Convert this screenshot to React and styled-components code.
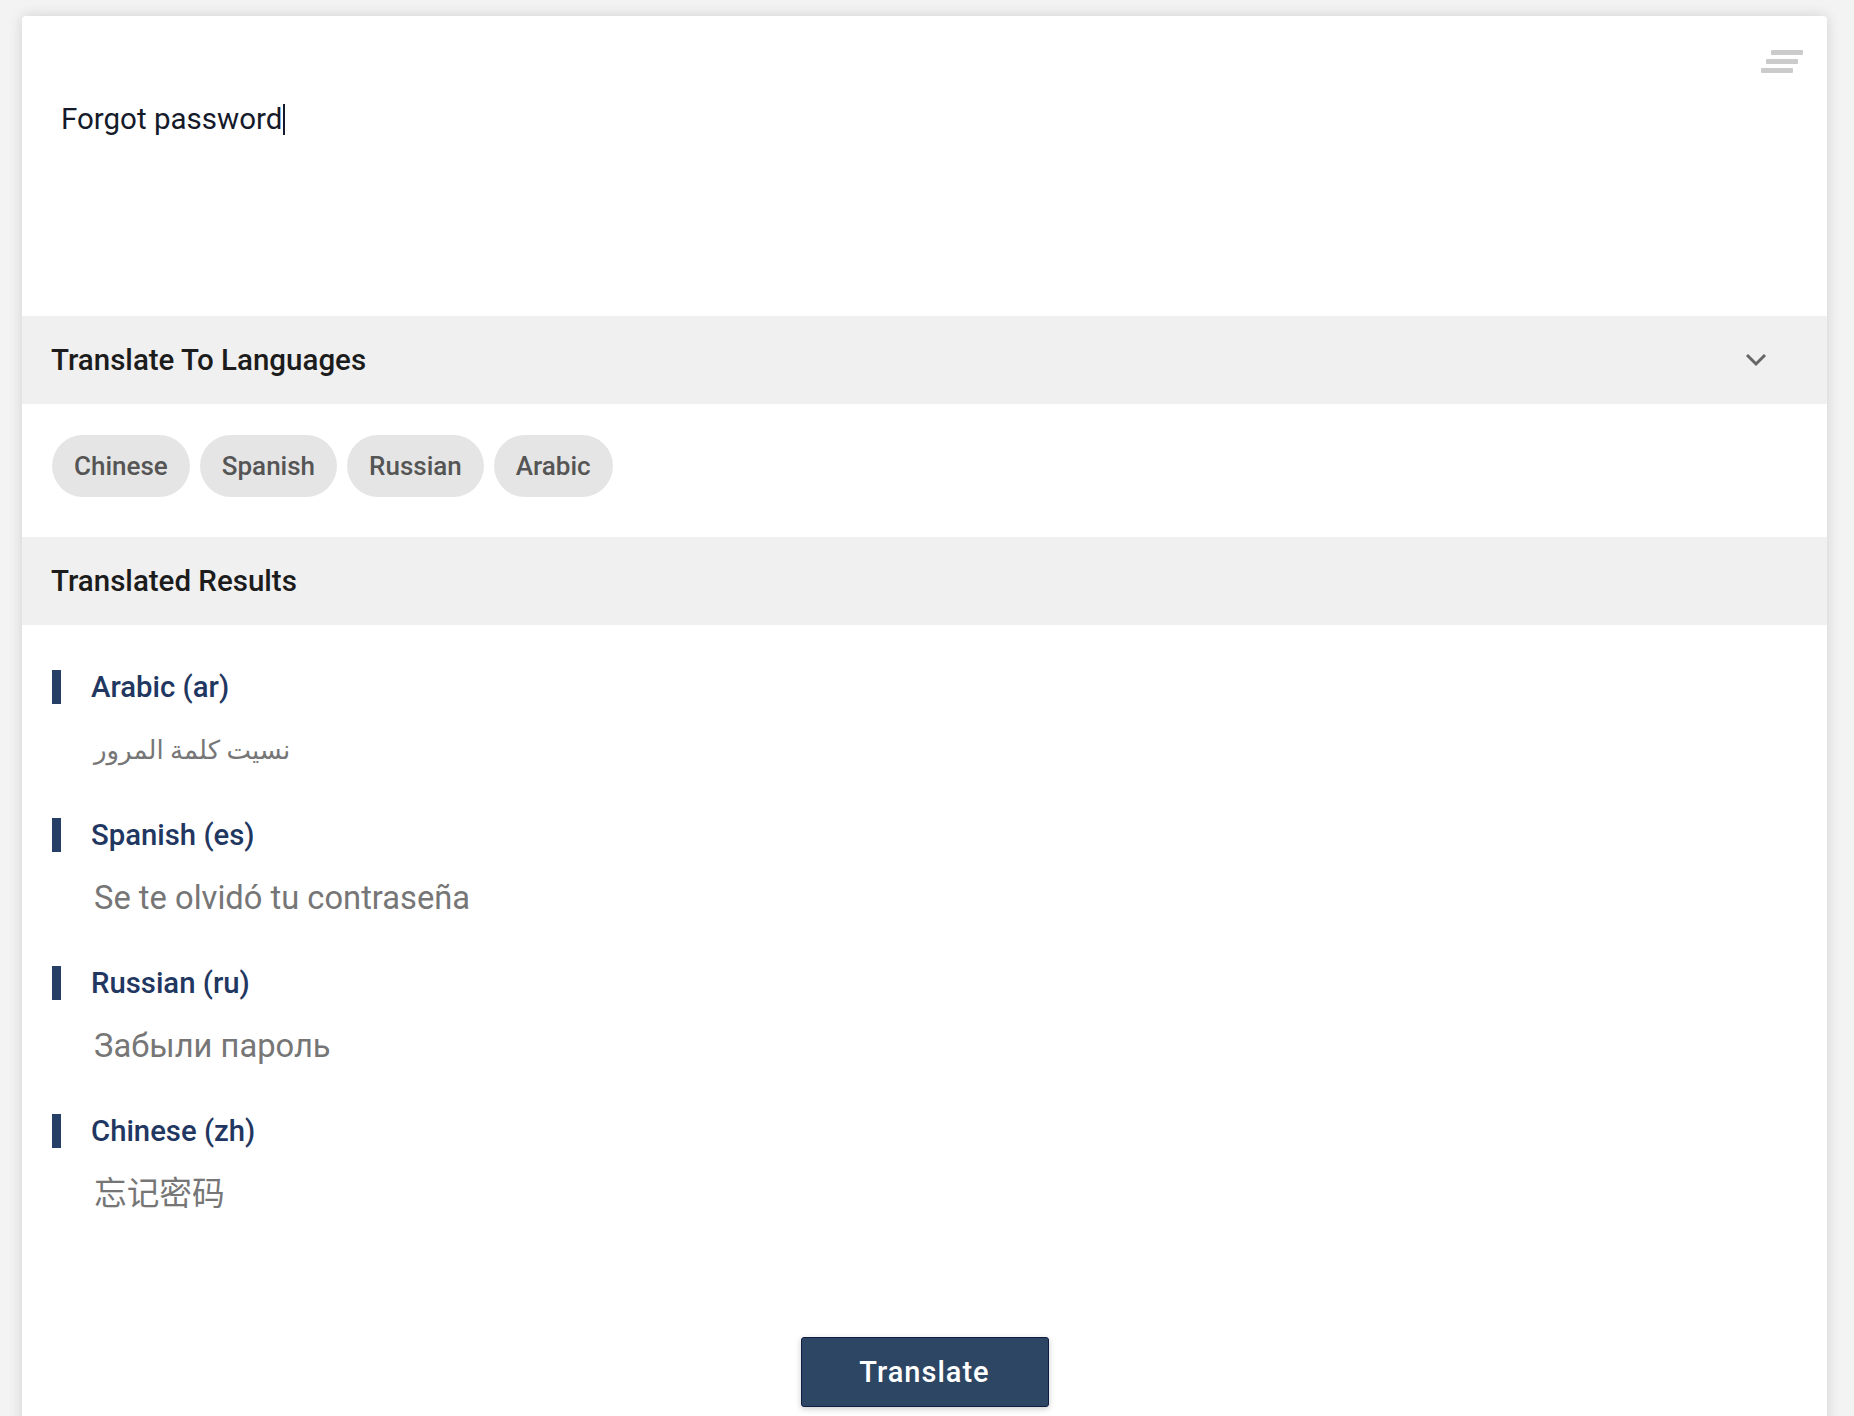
import React from 'react';
import styled, { createGlobalStyle } from 'styled-components';

const languages = ['Chinese', 'Spanish', 'Russian', 'Arabic'];

const results = [
  { name: 'Arabic', code: 'ar', text: 'نسيت كلمة المرور', rtl: true },
  { name: 'Spanish', code: 'es', text: 'Se te olvidó tu contraseña' },
  { name: 'Russian', code: 'ru', text: 'Забыли пароль' },
  { name: 'Chinese', code: 'zh', text: '忘记密码' },
];

const App = () => {
  return (
    <>
      <GlobalStyle />
      <Card>
        <InputArea>
          <InputText>
            Forgot password<Caret />
          </InputText>
          <NotesIcon width="42" height="26" viewBox="0 0 42 26">
            <rect x="10" y="0" width="32" height="5" rx="1" />
            <rect x="5" y="9" width="32" height="5" rx="1" />
            <rect x="0" y="18" width="32" height="5" rx="1" />
          </NotesIcon>
        </InputArea>

        <SectionBar>
          <SectionTitle>Translate To Languages</SectionTitle>
          <Chevron width="22" height="14" viewBox="0 0 22 14">
            <path d="M2 2 L11 11 L20 2" />
          </Chevron>
        </SectionBar>

        <ChipRow>
          {languages.map((lang) => (
            <Chip key={lang}>{lang}</Chip>
          ))}
        </ChipRow>

        <SectionBar>
          <SectionTitle>Translated Results</SectionTitle>
        </SectionBar>

        <ResultList>
          {results.map((r) => (
            <ResultItem key={r.code}>
              <ResultLabel>
                <LabelBar />
                {r.name} ({r.code})
              </ResultLabel>
              <ResultText dir={r.rtl ? 'rtl' : 'ltr'} $rtl={r.rtl}>
                {r.text}
              </ResultText>
            </ResultItem>
          ))}
        </ResultList>

        <Footer>
          <TranslateButton>Translate</TranslateButton>
        </Footer>
      </Card>
    </>
  );
};

export default App;

const GlobalStyle = createGlobalStyle`
  body {
    margin: 0;
    background: #f3f3f3;
    font-family: Roboto, "Liberation Sans", sans-serif;
  }
`;

const Card = styled.div`
  margin: 16px 27px 0 22px;
  background: #fff;
  border-radius: 4px 4px 0 0;
  box-shadow: 0 0 14px rgba(0, 0, 0, 0.14);
  display: flex;
  flex-direction: column;
`;

const InputArea = styled.div`
  height: 300px;
  box-sizing: border-box;
  padding: 34px 24px 0 39px;
  display: flex;
  justify-content: space-between;
  align-items: flex-start;
`;

const InputText = styled.div`
  margin-top: 51px;
  font-size: 29.5px;
  line-height: 36px;
  color: #151a2b;
  display: flex;
  align-items: center;
`;

const Caret = styled.span`
  display: inline-block;
  width: 2px;
  height: 31px;
  margin-left: 1px;
  background: #151a2b;
`;

const NotesIcon = styled.svg`
  fill: #cbcbcb;
  flex-shrink: 0;
`;

const SectionBar = styled.div`
  height: 88px;
  background: #f0f0f0;
  padding: 0 60px 0 29px;
  display: flex;
  align-items: center;
  justify-content: space-between;
`;

const SectionTitle = styled.h2`
  margin: 0;
  font-size: 29.5px;
  font-weight: 500;
  color: #1c1c1c;
`;

const Chevron = styled.svg`
  fill: none;
  stroke: #666;
  stroke-width: 3;
`;

const ChipRow = styled.div`
  display: flex;
  gap: 10px;
  padding: 31px 30px 40px;
`;

const Chip = styled.div`
  height: 62px;
  padding: 0 22px;
  border-radius: 31px;
  background: #e5e5e5;
  color: #555;
  font-size: 26px;
  font-weight: 500;
  display: flex;
  align-items: center;
`;

const ResultList = styled.div`
  display: flex;
  flex-direction: column;
  gap: 48px;
  padding: 45px 30px 0;
`;

const ResultItem = styled.div`
  display: flex;
  flex-direction: column;
  gap: 26px;
`;

const ResultLabel = styled.div`
  height: 34px;
  display: flex;
  align-items: center;
  gap: 30px;
  font-size: 29.3px;
  font-weight: 500;
  color: #1f3761;
`;

const LabelBar = styled.span`
  width: 9px;
  height: 34px;
  background: #263f66;
`;

const ResultText = styled.div`
  align-self: flex-start;
  margin-left: 42px;
  font-size: ${(p) => (p.$rtl ? '26px' : '32.7px')};
  line-height: 40px;
  color: #767676;
  font-family: Roboto, "DejaVu Sans", "Noto Sans CJK SC", sans-serif;
`;

const Footer = styled.div`
  display: flex;
  justify-content: center;
  padding: 123px 0 40px;
`;

const TranslateButton = styled.button`
  width: 248px;
  height: 70px;
  background: #2d4664;
  border: 1px solid #0f1d42;
  border-radius: 3px;
  box-shadow: 0 2px 6px rgba(0, 0, 0, 0.2);
  color: #fff;
  font-family: Roboto, "Liberation Sans", sans-serif;
  font-size: 29px;
  font-weight: 500;
  letter-spacing: 1px;
  cursor: pointer;
`;
